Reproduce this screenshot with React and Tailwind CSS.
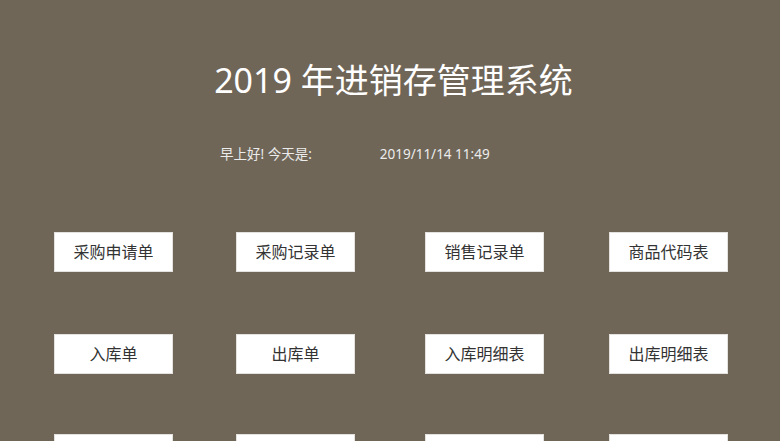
export default function App() {
  const rows = [
    ["采购申请单", "采购记录单", "销售记录单", "商品代码表"],
    ["入库单", "出库单", "入库明细表", "出库明细表"],
    ["", "", "", ""],
  ];
  const ml = ["", "ml-[63px]", "ml-[70px]", "ml-[65px]"];
  const mt = ["mt-[69px]", "mt-[62px]", "mt-[60px]"];
  return (
    <div className="w-[780px] h-[441px] overflow-hidden bg-[#6f6658] font-['Noto_Sans','Noto_Sans_CJK_SC',sans-serif]">
      <div className="pt-[60px] pl-[7px] text-center text-[34px] leading-[40px] text-white">
        2019 年进销存管理系统
      </div>
      <div className="mt-[45px] flex items-center text-[13.5px] leading-[18px] text-[#ececec]">
        <span className="ml-[220px]">早上好! 今天是:</span>
        <span className="ml-[68px] text-[13.5px]">2019/11/14 11:49</span>
      </div>
      {rows.map((row, i) => (
        <div key={i} className={`flex pl-[54px] ${mt[i]}`}>
          {row.map((t, j) => (
            <div
              key={j}
              className={`${ml[j]} w-[119px] h-[40px] bg-white border border-[#e4e2de] flex items-center justify-center text-[16px] text-[#333]`}
            >
              {t}
            </div>
          ))}
        </div>
      ))}
    </div>
  );
}
